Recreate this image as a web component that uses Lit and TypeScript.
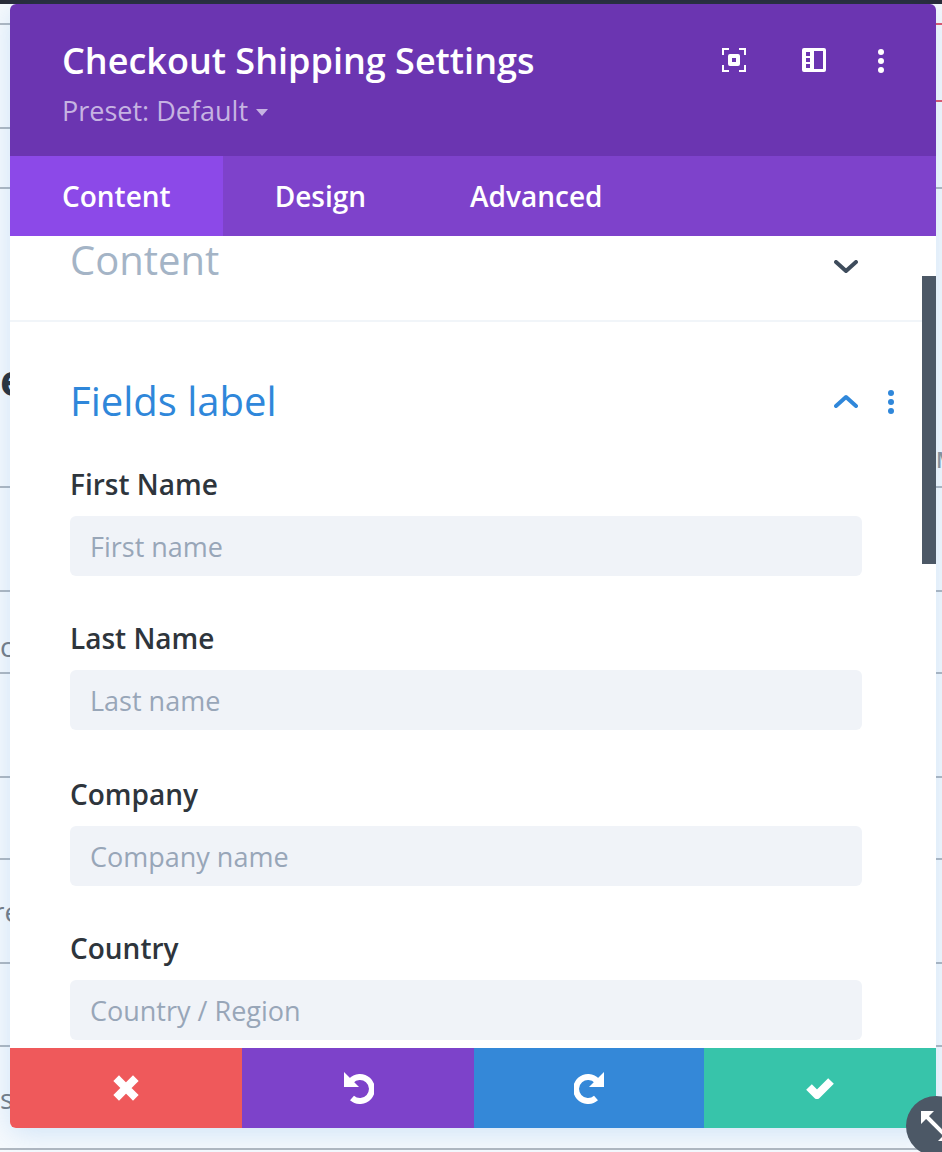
import { LitElement, html, css, svg } from 'lit';
import { customElement } from 'lit/decorators.js';

const fields = [
  { label: 'First Name', placeholder: 'First name' },
  { label: 'Last Name', placeholder: 'Last name' },
  { label: 'Company', placeholder: 'Company name' },
  { label: 'Country', placeholder: 'Country / Region' },
];

// backdrop rows: height down to the rule under each, plus a clipped bit of page text
const rows = [
  { h: 19, text: '' },
  { h: 102, text: '' },
  { h: 58, text: '' },
  { h: 297, text: 'e', cls: 'heading' },
  { h: 102, text: '' },
  { h: 80, text: 'c', cls: 'low' },
  { h: 102, text: '' },
  { h: 80, text: '' },
  { h: 102, text: 're', cls: 'cut' },
  { h: 81, text: '' },
  { h: 101, text: 's' },
];

const dots = (color: string) => svg`
  <circle cx="3" cy="3" r="3" fill=${color}></circle>
  <circle cx="3" cy="12" r="3" fill=${color}></circle>
  <circle cx="3" cy="21" r="3" fill=${color}></circle>
`;

@customElement('app-root')
export class AppRoot extends LitElement {
  static styles = css`
    :host {
      display: block;
      position: relative;
      width: 942px;
      height: 1152px;
      overflow: hidden;
      background: #f7fafd;
      font-family: "Open Sans", "Liberation Sans", sans-serif;
    }

    .backdrop {
      border-top: 4px solid #282a36;
      display: flex;
      flex-direction: column;
    }

    .backdrop > div {
      border-bottom: 2px solid #b1b8c0;
      color: #767c84;
      display: flex;
      align-items: center;
      overflow: hidden;
    }

    .backdrop span {
      font-size: 28px;
    }

    .backdrop span.heading {
      color: #2a2f36;
      font-size: 43px;
      font-weight: 700;
      margin-top: 84px;
    }

    .backdrop span.low {
      margin-top: 28px;
    }

    .backdrop span.cut {
      margin-left: -7px;
    }

    .edge {
      position: absolute;
      left: 936px;
      top: 4px;
      width: 6px;
      height: 182px;
      background: #f7fafd;
    }

    .edge i {
      display: block;
      height: 2px;
      margin-top: 19px;
      background: #e0566b;
    }

    .edge i + i {
      margin-top: 75px;
    }

    .edge-mark {
      position: absolute;
      left: 936px;
      top: 444px;
      color: #8c9298;
      font-size: 22px;
      font-weight: 600;
      line-height: 30px;
    }

    .modal,
    .shadow {
      position: absolute;
      left: 10px;
      top: 4px;
      width: 926px;
      height: 1124px;
      border-radius: 6px;
    }

    .modal {
      display: flex;
      flex-direction: column;
      background: #fff;
      overflow: hidden;
    }

    .shadow {
      box-shadow: 0 5px 30px rgba(43, 135, 218, 0.2);
    }

    header {
      background: #6b35b1;
      height: 152px;
      box-sizing: border-box;
      padding: 34px 52px 0 52px;
      display: flex;
      justify-content: space-between;
      flex-shrink: 0;
    }

    h1 {
      margin: 0;
      color: #fff;
      font-size: 36px;
      font-weight: 600;
      line-height: 46px;
    }

    .preset {
      color: #c6b3e2;
      font-size: 27px;
      line-height: 36px;
      margin-top: 9px;
      display: flex;
      align-items: center;
      gap: 8px;
    }

    .caret {
      border-top: 7px solid #c6b3e2;
      border-left: 6px solid transparent;
      border-right: 6px solid transparent;
      margin-top: 2px;
    }

    .actions {
      display: flex;
      gap: 52px;
      padding-top: 10px;
      height: 24px;
    }

    .actions svg:first-child {
      margin-right: 4px;
    }

    .actions svg:last-child {
      margin-top: 1px;
    }

    .tabs {
      display: flex;
      background: #7e42cb;
      height: 80px;
      flex-shrink: 0;
    }

    .tab {
      color: #fff;
      font-size: 28px;
      font-weight: 600;
      line-height: 80px;
      padding: 0 52px;
    }

    .tab.active {
      background: #8c49e8;
    }

    .body {
      flex: 1;
      min-height: 0;
      overflow: hidden;
      position: relative;
    }

    .section-head {
      display: flex;
      align-items: center;
      justify-content: space-between;
      padding-left: 60px;
    }

    .section-head h2 {
      margin: 0;
      font-size: 40px;
      font-weight: 400;
      line-height: 50px;
    }

    .closed {
      height: 84px;
      border-bottom: 2px solid #f1f5f9;
      align-items: flex-start;
      padding-right: 78px;
    }

    .closed h2 {
      color: #a4b4c6;
      margin-top: -1px;
    }

    .closed svg {
      margin-top: 24px;
    }

    .open {
      margin-top: 54px;
      height: 50px;
      padding-right: 42px;
    }

    .open h2 {
      color: #2f87da;
    }

    .tools {
      display: flex;
      align-items: center;
      gap: 30px;
      margin-top: 2px;
    }

    .tools svg:first-child {
      margin-top: -2px;
    }

    .fields {
      padding: 40px 74px 0 60px;
    }

    .field {
      margin-bottom: 44px;
    }

    .field:nth-child(2) {
      margin-bottom: 46px;
    }

    label {
      display: block;
      color: #2e353c;
      font-size: 28px;
      font-weight: 600;
      line-height: 36px;
      margin-bottom: 14px;
    }

    input {
      display: block;
      box-sizing: border-box;
      width: 100%;
      height: 60px;
      border: 0;
      border-radius: 6px;
      background: #f0f3f8;
      padding: 0 20px;
      font-family: inherit;
      font-size: 27px;
      color: #2e353c;
    }

    input::placeholder {
      color: #98a6b8;
      opacity: 1;
    }

    .scrollbar {
      position: absolute;
      top: 40px;
      right: 0;
      width: 14px;
      height: 288px;
      background: #4c5866;
    }

    footer {
      display: grid;
      grid-template-columns: 232px 232px 230px 232px;
      height: 80px;
      flex-shrink: 0;
    }

    footer > div {
      display: flex;
      align-items: center;
      justify-content: center;
    }

    .cancel { background: #ef595b; }
    .undo { background: #7d42ca; }
    .redo { background: #3488d8; }
    .save { background: #37c4aa; }

    .undo svg {
      margin-left: 2px;
    }

    .resize {
      position: absolute;
      left: 906px;
      top: 1096px;
      width: 60px;
      height: 60px;
      border-radius: 50%;
      background: #4c5866;
    }

    svg {
      display: block;
      flex-shrink: 0;
    }
  `;

  renderHeaderIcons() {
    return html`
      <div class="actions">
        <svg width="24" height="24" viewBox="0 0 24 24">
          <path fill="none" stroke="#fff" stroke-width="2" d="M1 7V1h6M17 1h6v6M23 17v6h-6M7 23H1v-6"></path>
          <path fill="#fff" fill-rule="evenodd" d="M8 6h8a2 2 0 0 1 2 2v8a2 2 0 0 1-2 2H8a2 2 0 0 1-2-2V8a2 2 0 0 1 2-2zm2 4v4h4v-4z"></path>
        </svg>
        <svg width="24" height="24" viewBox="0 0 24 24">
          <path fill="#fff" fill-rule="evenodd" d="M2 0h20a2 2 0 0 1 2 2v20a2 2 0 0 1-2 2H2a2 2 0 0 1-2-2V2a2 2 0 0 1 2-2zm2 4v4h4V4zm0 6v4h4v-4zm0 6v4h4v-4zM12 3v18h9V3z"></path>
        </svg>
        <svg width="6" height="24" viewBox="0 0 6 24">${dots('#fff')}</svg>
      </div>
    `;
  }

  render() {
    return html`
      <div class="backdrop">
        ${rows.map(row => html`
          <div style="height: ${row.h}px"><span class=${row.cls ?? ''}>${row.text}</span></div>
        `)}
      </div>
      <div class="edge"><i></i><i></i></div>
      <div class="edge-mark">M</div>
      <div class="shadow"></div>
      <div class="modal">
        <header>
          <div>
            <h1>Checkout Shipping Settings</h1>
            <div class="preset">Preset: Default <span class="caret"></span></div>
          </div>
          ${this.renderHeaderIcons()}
        </header>
        <div class="tabs">
          <div class="tab active">Content</div>
          <div class="tab">Design</div>
          <div class="tab">Advanced</div>
        </div>
        <div class="body">
          <div class="section-head closed">
            <h2>Content</h2>
            <svg width="24" height="14" viewBox="0 0 24 14">
              <path fill="none" stroke="#3e4c5c" stroke-width="4" stroke-linecap="round" stroke-linejoin="round" d="M2 2l10 9 10-9"></path>
            </svg>
          </div>
          <div class="section-head open">
            <h2>Fields label</h2>
            <div class="tools">
              <svg width="24" height="14" viewBox="0 0 24 14">
                <path fill="none" stroke="#2f87da" stroke-width="4" stroke-linecap="round" stroke-linejoin="round" d="M2 12l10-9 10 9"></path>
              </svg>
              <svg width="6" height="24" viewBox="0 0 6 24">${dots('#2f87da')}</svg>
            </div>
          </div>
          <div class="fields">
            ${fields.map(field => html`
              <div class="field">
                <label>${field.label}</label>
                <input placeholder=${field.placeholder} />
              </div>
            `)}
          </div>
          <div class="scrollbar"></div>
        </div>
        <footer>
          <div class="cancel">
            <svg width="26" height="26" viewBox="0 0 26 26">
              <path fill="none" stroke="#fff" stroke-width="8" stroke-linecap="square" stroke-linejoin="round" d="M6 6l14 14M20 6L6 20"></path>
            </svg>
          </div>
          <div class="undo">
            <svg width="30" height="32" viewBox="0 0 30 32">
              <path fill="none" stroke="#fff" stroke-width="6" d="M7 9a12 12 0 1 1 1 17"></path>
              <path fill="#fff" d="M0 0l15 15H0z"></path>
            </svg>
          </div>
          <div class="redo">
            <svg width="30" height="32" viewBox="0 0 30 32">
              <path fill="none" stroke="#fff" stroke-width="6" d="M23 9a12 12 0 1 0-1 17"></path>
              <path fill="#fff" d="M30 0L15 15h15z"></path>
            </svg>
          </div>
          <div class="save">
            <svg width="28" height="22" viewBox="0 0 28 22">
              <path fill="none" stroke="#fff" stroke-width="8" stroke-linejoin="round" d="M3 10l8 8L25 4"></path>
            </svg>
          </div>
        </footer>
      </div>
      <div class="resize">
        <svg width="60" height="60" viewBox="0 0 60 60">
          <path fill="none" stroke="#fff" stroke-width="4" d="M20 20l22 22"></path>
          <path fill="#fff" d="M15 15h13L15 28zM45 45H32l13-13z"></path>
        </svg>
      </div>
    `;
  }
}
